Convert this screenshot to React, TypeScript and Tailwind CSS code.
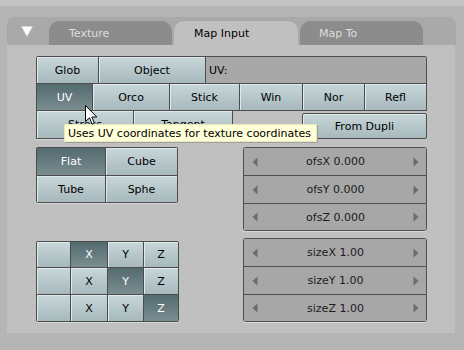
import React from "react";

const btn =
  "flex items-center justify-center text-black bg-gradient-to-b from-[#c7d6d9] to-[#a7b9bd] shadow-[inset_1px_1px_0_#e0e9eb]";
const sel =
  "flex items-center justify-center text-white bg-gradient-to-b from-[#536a6e] to-[#7b8e92]";

function LeftArrow() {
  return (
    <svg width="6" height="10" viewBox="0 0 6 10" className="shrink-0">
      <polygon points="5.5,0.5 0.5,5 5.5,9.5" fill="#6c6c6c" />
    </svg>
  );
}
function RightArrow() {
  return (
    <svg width="6" height="10" viewBox="0 0 6 10" className="shrink-0">
      <polygon points="0.5,0.5 5.5,5 0.5,9.5" fill="#6c6c6c" />
    </svg>
  );
}

function NumField({ label }: { label: string }) {
  return (
    <div className="flex items-center justify-between bg-[#a7a7a7] pl-[8px] pr-[7px] text-[#1c1c1c]">
      <LeftArrow />
      <span>{label}</span>
      <RightArrow />
    </div>
  );
}

export default function App() {
  return (
    <div className="relative w-[464px] h-[350px] overflow-hidden bg-[#b5b5b5] font-['DejaVu_Sans',sans-serif] text-[11px] leading-none">
      <div className="h-[6px] bg-[#c3c3c3]" />
      <div className="ml-[7px] mt-[11px] w-[448px]">
        {/* header */}
        <div className="flex h-[28px] w-[449px] items-stretch rounded-t-[8px] bg-[#a9a9a9]">
          <div className="w-[42px] pl-[14px] pt-[9px]">
            <svg width="12" height="11" viewBox="0 0 12 11">
              <polygon points="0.5,0.5 11.5,0.5 6,10.5" fill="#ffffff" stroke="#d8d8d8" strokeWidth="0.6" />
            </svg>
          </div>
          <div className="mt-auto flex h-[24px] gap-[2px]">
            <div className="flex w-[123px] items-center rounded-t-[10px] bg-[#8c8c8c] pl-[20px] text-[#dedede]">
              Texture
            </div>
            <div className="flex w-[124px] items-center rounded-t-[10px] bg-[#c0c0c0] pl-[20px] text-black">
              Map Input
            </div>
            <div className="flex w-[123px] items-center rounded-t-[10px] bg-[#8c8c8c] pl-[19px] text-[#dedede]">
              Map To
            </div>
          </div>
        </div>
        {/* body */}
        <div className="h-[288px] bg-[#c0c0c0] pl-[29px] pt-[11px]">
          {/* block A */}
          <div className="w-[391px]">
            <div className="flex h-[28px] border border-[#4c4c4c] rounded-t-[2px]">
              <div className={`${btn} w-[62px] border-r border-[#4c4c4c]`}>Glob</div>
              <div className={`${btn} w-[107px] border-r border-[#4c4c4c]`}>Object</div>
              <div className="flex flex-1 items-center bg-[#a8a8a8] pl-[3px] text-black">UV:</div>
            </div>
            <div className="-mt-px flex h-[28px] border border-[#4c4c4c]">
              <div className={`${sel} w-[56px] border-r border-[#4c4c4c]`}>UV</div>
              <div className={`${btn} w-[77px] border-r border-[#4c4c4c]`}>Orco</div>
              <div className={`${btn} w-[70px] border-r border-[#4c4c4c]`}>Stick</div>
              <div className={`${btn} w-[63px] border-r border-[#4c4c4c]`}>Win</div>
              <div className={`${btn} w-[62px] border-r border-[#4c4c4c]`}>Nor</div>
              <div className={`${btn} flex-1`}>Refl</div>
            </div>
            <div className="-mt-px flex">
              <div className="flex h-[29px] w-[197px] border border-[#4c4c4c] shadow-[0_1px_0_#dadada]">
                <div className={`${btn} w-[97px] border-r border-[#4c4c4c]`}>Stress</div>
                <div className={`${btn} flex-1`}>Tangent</div>
              </div>
              <div className={`${btn} ml-auto mt-[3px] h-[26px] w-[125px] border border-[#4c4c4c] rounded-[2px] shadow-[0_1px_0_#dadada,inset_1px_1px_0_#e0e9eb]`}>
                From Dupli
              </div>
            </div>
          </div>

          {/* block B */}
          <div className="mt-[8px] flex w-[391px] justify-between">
            <div className="grid h-[56px] w-[142px] grid-cols-[68px_1fr] grid-rows-[27px_26px] gap-px rounded-[2px] bg-[#4c4c4c] p-px shadow-[0_1px_0_#dadada]">
              <div className={sel}>Flat</div>
              <div className={btn}>Cube</div>
              <div className={btn}>Tube</div>
              <div className={btn}>Sphe</div>
            </div>
            <div className="grid h-[84px] w-[184px] grid-rows-[27px_27px_26px] gap-px rounded-[3px] bg-[#505050] p-px shadow-[0_1px_0_#dadada]">
              <NumField label="ofsX 0.000" />
              <NumField label="ofsY 0.000" />
              <NumField label="ofsZ 0.000" />
            </div>
          </div>

          {/* block C */}
          <div className="mt-[7px] flex w-[391px] items-start justify-between">
            <div className="mt-[3px] grid h-[81px] w-[143px] grid-cols-[33px_36px_35px_1fr] grid-rows-[25px_26px_26px] gap-px rounded-[2px] bg-[#4c4c4c] p-px shadow-[0_1px_0_#dadada]">
              <div className={btn} />
              <div className={sel}>X</div>
              <div className={btn}>Y</div>
              <div className={btn}>Z</div>
              <div className={btn} />
              <div className={btn}>X</div>
              <div className={sel}>Y</div>
              <div className={btn}>Z</div>
              <div className={btn} />
              <div className={btn}>X</div>
              <div className={btn}>Y</div>
              <div className={sel}>Z</div>
            </div>
            <div className="grid h-[84px] w-[184px] grid-rows-[27px_27px_26px] gap-px rounded-[3px] bg-[#505050] p-px shadow-[0_1px_0_#dadada]">
              <NumField label="sizeX 1.00" />
              <NumField label="sizeY 1.00" />
              <NumField label="sizeZ 1.00" />
            </div>
          </div>
        </div>
      </div>

      {/* tooltip */}
      <div className="absolute left-[64px] top-[124px] flex h-[18px] w-[253px] items-center border border-[#e8e8b8] bg-[#ffffd8] pl-[3px] text-black shadow-[1px_1px_0_#a0a0a0]">
        Uses UV coordinates for texture coordinates
      </div>

      {/* cursor */}
      <svg className="absolute left-[85px] top-[105px]" width="13" height="21" viewBox="0 0 13 21">
        <path d="M0.5 0.5 L0.5 16.5 L4.5 12.8 L7.2 19.2 L9.4 18.2 L6.8 12 L11.8 12 Z" fill="#ffffff" stroke="#000000" strokeWidth="1" strokeLinejoin="miter" />
      </svg>
    </div>
  );
}
